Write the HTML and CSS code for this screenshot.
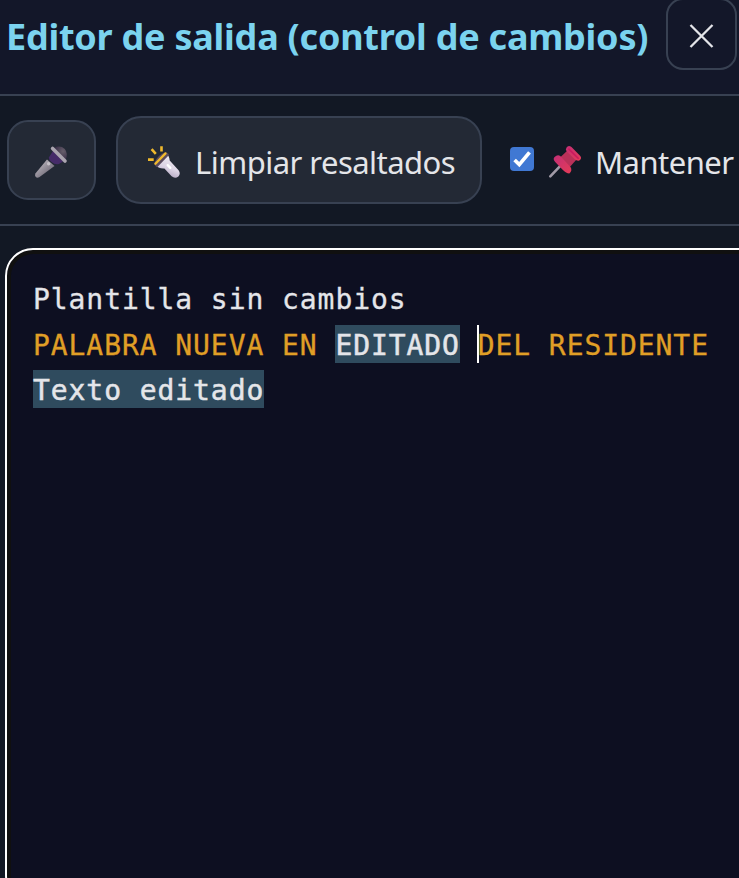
FILE: index.html
```html
<!DOCTYPE html>
<html lang="es">
<head>
<meta charset="utf-8">
<title>Editor de salida</title>
<link rel="stylesheet" href="styles.css">
</head>
<body>
<main class="panel">
  <header class="header">
    <h1 class="title">Editor de salida (control de cambios)</h1>
    <button class="close" aria-label="Cerrar">
      <svg width="26" height="26" viewBox="0 0 26 26"><path d="M1.5 2 23.5 24M23.5 2 1.5 24" stroke="#e4e5e9" stroke-width="2.3" fill="none"/></svg>
    </button>
  </header>
  <div class="toolbar">
    <button class="btn mic" aria-label="Dictar">
      <svg width="34" height="34" viewBox="0 0 34 34">
        <defs>
          <linearGradient id="handle" x1="0" y1="0" x2="1" y2="1"><stop offset=".3" stop-color="#aaa5ae"/><stop offset=".75" stop-color="#756f7c"/></linearGradient>
          <radialGradient id="head" cx=".7" cy=".35" r=".7"><stop offset="0" stop-color="#675f6b"/><stop offset="1" stop-color="#362b45"/></radialGradient>
        </defs>
        <path d="M1.4 28.5 13 14.5 20.5 21 5.2 32.2Q3 33.3 1.6 31.8.5 30.4 1.4 28.5Z" fill="url(#handle)"/>
        <path d="M14.8 12.5 19 6 29 16.5 25 19Q21 20 17.5 17Q14.5 14.5 14.8 12.5Z" fill="#452b68"/>
        <path d="M20 3Q26-.2 30.8 4 34.6 8.7 31.5 15Z" fill="url(#head)"/>
        <path d="M18.6 3.5 31 16" stroke="#aba5b0" stroke-width="3.6" stroke-linecap="round"/>
        <circle cx="14.6" cy="18.8" r="1.7" fill="#c4c0c7"/>
      </svg>
    </button>
    <button class="btn clear">
      <svg width="34" height="34" viewBox="0 0 34 34">
        <defs>
          <linearGradient id="torch" x1=".7" y1="0" x2=".3" y2="1"><stop offset="0" stop-color="#f1edf3"/><stop offset=".55" stop-color="#ddd5e5"/><stop offset="1" stop-color="#a99bb8"/></linearGradient>
        </defs>
        <path d="M14.5 1.2V6.6M4.6 4.2 8.8 8.8M1 14.6H6.7" stroke="#f0b92d" stroke-width="2.6"/>
        <path d="M9 20.5 19.8 9.2Q22.4 11 22.7 15.6L31.6 25.2Q34 28.5 31.4 31.4 28 34 24.6 31.2L17.4 23.5Q12 24 9 20.5Z" fill="url(#torch)"/>
        <path d="M7.5 17.8Q10.7 9.5 18.6 7.2 22 8.4 22 10L10.2 22.2Q7.3 21 7.5 17.8Z" fill="#594a5d"/>
        <path d="M8.4 18.7 18.5 8.4" stroke="#f0b92d" stroke-width="2.3" stroke-linecap="round"/>
        <path d="M20.7 20.2 23.3 22.8" stroke="#fff" stroke-width="2.4" stroke-linecap="round"/>
      </svg>
      <span class="label clear-label">Limpiar resaltados</span>
    </button>
    <label class="keep">
      <span class="check" role="checkbox" aria-checked="true">
        <svg width="24" height="24" viewBox="0 0 24 24"><path d="M4.6 13 9.3 17.6 19.5 5.4" stroke="#fff" stroke-width="3.7" fill="none"/></svg>
      </span>
      <svg class="pin" width="34" height="34" viewBox="0 0 34 34">
        <defs>
          <linearGradient id="pin" x1="0" y1="0" x2="1" y2="1"><stop offset="0" stop-color="#c32f75"/><stop offset="1" stop-color="#e53b57"/></linearGradient>
        </defs>
        <path d="M2.3 31.4 13 20.2" stroke="#a19aa7" stroke-width="2.6" stroke-linecap="round"/>
        <path d="M12 12.5 20 5 29 14 21.8 22Z" fill="#b93159"/>
        <path d="M6.6 12Q9.5 9.2 12.5 11.2L22.5 22Q24.7 25.8 21.3 28.4 18.4 28.5 14.4 24.4L7.2 16.9Q4.5 14 6.6 12Z" fill="url(#pin)"/>
        <path d="M18.4 2.8Q20.2-.2 23.5 2L32.3 11Q34.3 13.5 31.3 15.4 29.2 16.4 26.5 14L19 6.7Q17 4.7 18.4 2.8Z" fill="url(#pin)"/>
        <path d="M20.4 3.6 30.7 13.7" stroke="#c9195f" stroke-width="1.6"/>
      </svg>
      <span class="label keep-label">Mantener</span>
    </label>
  </div>
  <section class="editor">
    <div class="line">Plantilla sin cambios</div>
    <div class="line added">PALABRA NUEVA EN <mark>EDITADO</mark> <span class="caret"></span>DEL RESIDENTE</div>
    <div class="line"><mark>Texto editado</mark></div>
  </section>
</main>
</body>
</html>
```
FILE: styles.css
```css
* { box-sizing: border-box; }
html, body { height: 100%; overflow: hidden; }
body {
  margin: 0;
  background: #121824;
  color: #e4e5e9;
  font-family: "Noto Sans", "Open Sans", sans-serif;
}
button { padding: 0; color: inherit; font: inherit; }
svg { display: block; flex: none; overflow: visible; }
.panel { width: 739px; height: 878px; overflow: hidden; }
.header {
  display: flex;
  justify-content: space-between;
  height: 96px;
  padding: 0 2px 0 6px;
  background: #131729;
  border-bottom: 2px solid #384152;
}
.title {
  margin: 12px 0 0;
  color: #7bd3ef;
  font-size: 36px;
  line-height: 50px;
  font-weight: 700;
  letter-spacing: -0.24px;
  white-space: nowrap;
}
.close {
  display: flex;
  align-items: center;
  justify-content: center;
  flex: none;
  width: 71px;
  height: 72px;
  margin-top: -2px;
  padding-top: 3px;
  background: none;
  border: 2px solid #384152;
  border-radius: 17px;
}
.toolbar {
  display: flex;
  align-items: center;
  height: 130px;
  padding-left: 7px;
  border-bottom: 2px solid #384152;
}
.btn {
  display: flex;
  align-items: center;
  flex: none;
  background: #232935;
  border: 2px solid #384152;
}
.mic { justify-content: center; width: 89px; height: 80px; border-radius: 21px; padding: 3px 2px 0 0; }
.clear { width: 366px; height: 88px; margin-left: 20px; padding: 4px 0 0 29px; border-radius: 25px; }
.label { font-size: 31px; line-height: 44px; letter-spacing: -0.53px; white-space: nowrap; }
.clear-label { margin-left: 14px; }
.keep { display: flex; align-items: center; flex: none; margin-left: 28px; padding-top: 4px; }
.check { width: 24px; height: 24px; margin-top: -6px; background: #4078d3; border-radius: 4px; }
.pin { margin-left: 14px; }
.keep-label { margin-left: 13px; }
.editor {
  width: 760px;
  height: 655px;
  margin: 22px 0 0 5px;
  padding: 27px 26px;
  background: #0d0f21;
  border: 2px solid #fff;
  border-radius: 28px;
  box-shadow: inset 0 0 0 4px #101010;
  font-family: "DejaVu Sans Mono", monospace;
  font-size: 28px;
  line-height: 45.5px;
  letter-spacing: 0.93px;
  -webkit-text-stroke: 0.3px;
}
.line { height: 45.5px; white-space: pre; }
.added { color: #e09f26; }
mark {
  padding: 4px 0 1px;
  background: #2f4b5e;
  color: #e4e5e9;
  -webkit-text-stroke: 0.5px;
}
.caret {
  display: inline-block;
  width: 2px;
  height: 38px;
  margin: 0 -1px 0 -1px;
  background: #fff;
  vertical-align: -8px;
}
```
